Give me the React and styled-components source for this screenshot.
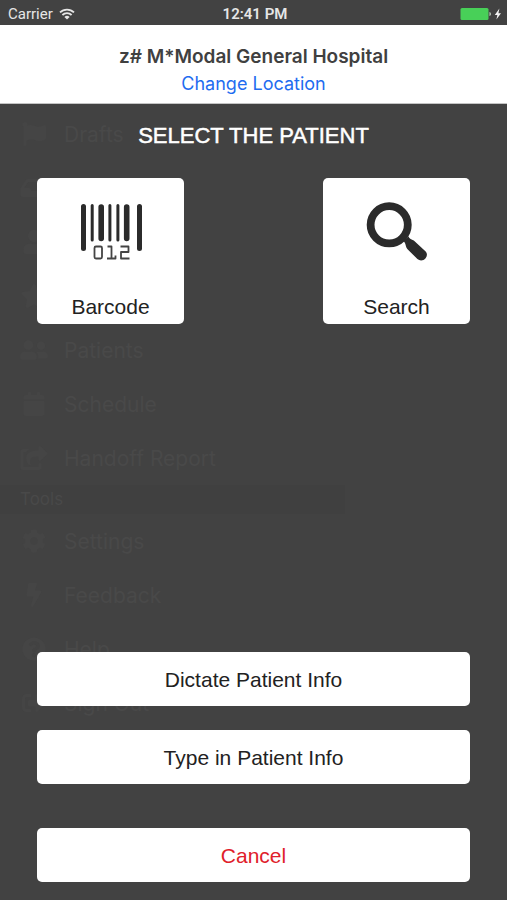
import React from 'react';
import styled, { createGlobalStyle } from 'styled-components';
import {
  FaFlag,
  FaInbox,
  FaUser,
  FaStar,
  FaUserFriends,
  FaCalendar,
  FaShareSquare,
  FaCog,
  FaBolt,
  FaQuestionCircle,
  FaSignOutAlt,
} from 'react-icons/fa';

const GlobalStyle = createGlobalStyle`
  * {
    box-sizing: border-box;
  }
  body {
    margin: 0;
    background: #424242;
    font-family: 'Liberation Sans', Arial, sans-serif;
  }
`;

const StyledScreen = styled.div`
  display: flex;
  flex-direction: column;
  min-height: 100vh;
  background: #424242;
`;

const StyledStatusBar = styled.div`
  display: grid;
  grid-template-columns: 1fr auto 1fr;
  align-items: center;
  height: 25px;
  padding: 2px 5px 0 8px;
  color: #e6e6e6;
  font-family: Roboto, sans-serif;
  font-size: 15px;
`;

const StyledCarrier = styled.div`
  display: flex;
  align-items: center;
  gap: 6px;
`;

const StyledClock = styled.div`
  font-weight: 600;
`;

const StyledBattery = styled.div`
  display: flex;
  justify-content: flex-end;
`;

const StyledHeader = styled.header`
  display: flex;
  flex-direction: column;
  align-items: center;
  gap: 3px;
  height: 79px;
  padding-top: 20px;
  background: #fff;
  border-bottom: 1px solid #c4c4c4;
`;

const StyledHospital = styled.h1`
  margin: 0;
  color: #404040;
  font-family: Inter, sans-serif;
  font-size: 19px;
  font-weight: 600;
  line-height: 24px;
`;

const StyledLocationLink = styled.a`
  color: #1f6cf0;
  font-family: Inter, sans-serif;
  font-size: 18px;
  line-height: 24px;
  text-decoration: none;
`;

/* the menu and the sheet share one cell, the sheet is drawn on top */
const StyledBody = styled.div`
  display: grid;
  flex: 1;
  grid-template-columns: 1fr;
`;

const StyledMenu = styled.nav`
  grid-area: 1 / 1;
  padding-top: 3px;
  color: #494949;
  font-family: Inter, sans-serif;
`;

const StyledMenuRow = styled.div`
  display: flex;
  align-items: center;
  gap: 16px;
  height: 54px;
  padding-left: 20px;
  font-size: 21px;

  & svg {
    width: 28px;
    height: 24px;
    color: #454545;
  }
`;

const StyledMenuSection = styled.div`
  width: 68%;
  height: 29px;
  padding-left: 20px;
  background: #404040;
  font-size: 17px;
  line-height: 29px;
`;

const StyledSheet = styled.main`
  grid-area: 1 / 1;
  display: flex;
  flex-direction: column;
  padding: 20px 37px 18px;
`;

const StyledTitle = styled.h2`
  margin: 0 0 30px;
  color: #fff;
  font-size: 22px;
  font-weight: 400;
  line-height: 24px;
  text-align: center;
  -webkit-text-stroke: 0.5px #fff;
`;

const StyledCards = styled.div`
  display: flex;
  justify-content: space-between;
`;

const StyledButton = styled.button`
  border: 0;
  border-radius: 5px;
  background: #fff;
  color: ${({ $danger }) => ($danger ? '#e0202a' : '#222')};
  font-family: inherit;
  font-size: 21px;
  line-height: 24px;
`;

const StyledCard = styled(StyledButton)`
  display: flex;
  flex-direction: column;
  align-items: center;
  justify-content: space-between;
  width: 147px;
  height: 146px;
  padding: 22px 0 5px;
`;

const StyledActions = styled.div`
  display: flex;
  flex-direction: column;
  gap: 24px;
  margin-top: auto;
`;

const StyledAction = styled(StyledButton)`
  width: 100%;
  height: 54px;
  margin-top: ${({ $danger }) => ($danger ? '20px' : '0')};
  padding: 2px 0 0;
`;

const menuItems = [
  { label: 'Drafts', Icon: FaFlag },
  { label: '', Icon: FaInbox },
  { label: '', Icon: FaUser },
  { label: '', Icon: FaStar },
  { label: 'Patients', Icon: FaUserFriends },
  { label: 'Schedule', Icon: FaCalendar },
  { label: 'Handoff Report', Icon: FaShareSquare },
];

const toolItems = [
  { label: 'Settings', Icon: FaCog },
  { label: 'Feedback', Icon: FaBolt },
  { label: 'Help', Icon: FaQuestionCircle },
  { label: 'Sign Out', Icon: FaSignOutAlt },
];

const WifiIcon = () => (
  <svg width="16" height="12" viewBox="0 0 16 12" fill="none" stroke="#e6e6e6">
    <path d="M1 4.4a10 10 0 0 1 14 0" strokeWidth="1.8" />
    <path d="M3.4 7a6.6 6.6 0 0 1 9.2 0" strokeWidth="1.8" />
    <path d="M8 11.6 5.4 8.9a3.8 3.8 0 0 1 5.2 0z" fill="#e6e6e6" stroke="none" />
  </svg>
);

const BatteryIcon = () => (
  <svg width="42" height="14" viewBox="0 0 42 14">
    <rect x="0.5" y="1" width="28" height="12" rx="1.5" fill="#48d058" />
    <path d="M29.500 5c1.800.3 1.800 3.700 0 4z" fill="#c8d8c8" />
    <path d="M39.400 1.500 34.800 8h2.600l-1 4.600L41 6.200h-2.600z" fill="#f4f4f4" />
  </svg>
);

const BarcodeIcon = () => (
  <svg width="64" height="60" viewBox="0 0 64 60" fill="none" stroke="#2b2b2b">
    <g strokeLinecap="round">
      <path d="M4.500 6.500v42M60.500 6.500v42" strokeWidth="5" />
      <path d="M22.200 7v31.500M47.700 7v31.500" strokeWidth="5.600" />
      <path d="M13.200 5.500v34.500M30.900 5.500v34.500M38.900 5.500v34.500" strokeWidth="3" />
    </g>
    <g stroke="#444" strokeWidth="1.800" strokeLinejoin="round">
      <rect x="15.500" y="46.500" width="7.500" height="12" rx="1.500" />
      <path d="M28.500 46.500h4v12M28 58.500h8.500v-3" />
      <path d="M41.500 46.500h8v5.500h-7.500v6.500h8.500" />
    </g>
  </svg>
);

const SearchIcon = () => (
  <svg width="64" height="62" viewBox="0 0 64 62" fill="#2b2b2b">
    <circle cx="24.200" cy="24.800" r="18.600" fill="none" stroke="#2b2b2b" strokeWidth="7.800" />
    <path d="M38.500 41l5-4.500c1 2.600 2.800 3 5.300 4.100l11.600 10.700c2 2 2 4.800.2 6.900-2.200 2.600-5.600 3-8.200.9L42.300 48.900c-1.800-2-1.200-5.400-3.800-7.900z" />
  </svg>
);

const MenuRow = ({ label, Icon }) => (
  <StyledMenuRow>
    <Icon />
    {label}
  </StyledMenuRow>
);

const App = () => {
  return (
    <StyledScreen>
      <GlobalStyle />
      <StyledStatusBar>
        <StyledCarrier>
          Carrier <WifiIcon />
        </StyledCarrier>
        <StyledClock>12:41 PM</StyledClock>
        <StyledBattery>
          <BatteryIcon />
        </StyledBattery>
      </StyledStatusBar>
      <StyledHeader>
        <StyledHospital>z# M*Modal General Hospital</StyledHospital>
        <StyledLocationLink href="#location">Change Location</StyledLocationLink>
      </StyledHeader>
      <StyledBody>
        <StyledMenu aria-hidden="true">
          {menuItems.map((item, index) => (
            <MenuRow key={index} {...item} />
          ))}
          <StyledMenuSection>Tools</StyledMenuSection>
          {toolItems.map((item) => (
            <MenuRow key={item.label} {...item} />
          ))}
        </StyledMenu>
        <StyledSheet>
          <StyledTitle>SELECT THE PATIENT</StyledTitle>
          <StyledCards>
            <StyledCard type="button">
              <BarcodeIcon />
              Barcode
            </StyledCard>
            <StyledCard type="button">
              <SearchIcon />
              Search
            </StyledCard>
          </StyledCards>
          <StyledActions>
            <StyledAction type="button">Dictate Patient Info</StyledAction>
            <StyledAction type="button">Type in Patient Info</StyledAction>
            <StyledAction type="button" $danger>
              Cancel
            </StyledAction>
          </StyledActions>
        </StyledSheet>
      </StyledBody>
    </StyledScreen>
  );
};

export default App;
